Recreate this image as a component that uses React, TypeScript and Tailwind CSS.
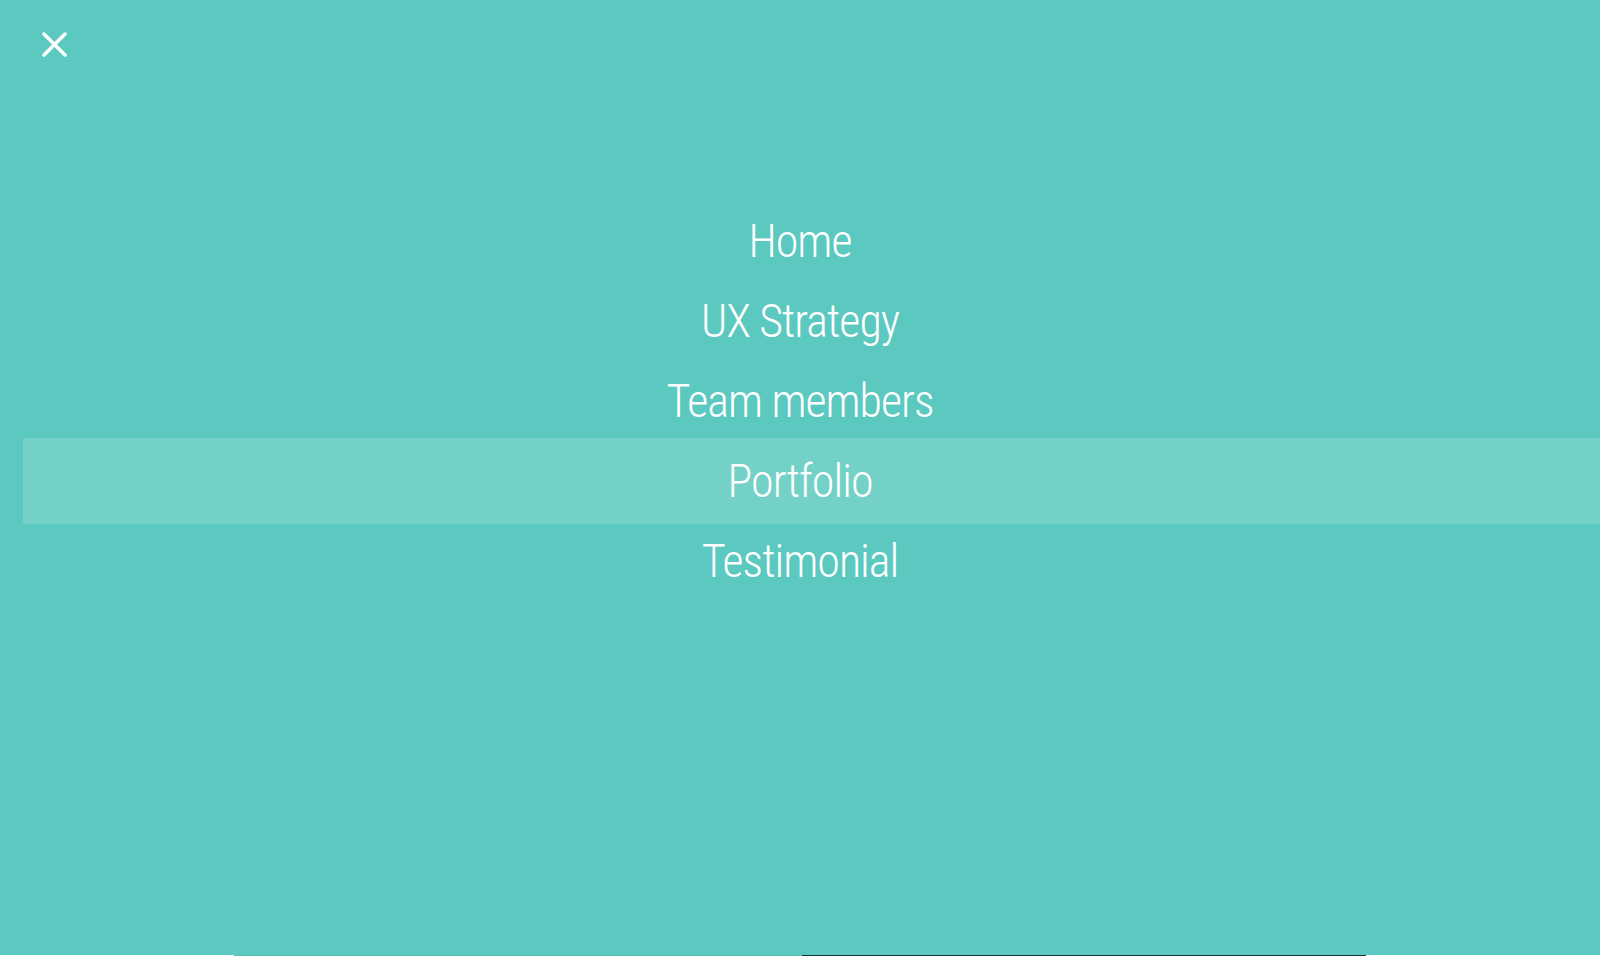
const menuItems = [
  { label: "Home" },
  { label: "UX Strategy" },
  { label: "Team members" },
  { label: "Portfolio", active: true },
  { label: "Testimonial" },
];

function CloseIcon() {
  return (
    <svg width="25" height="25" viewBox="0 0 25 25" fill="none" stroke="white" strokeWidth="3.5" strokeLinecap="round">
      <path d="M2 2 L23 23" />
      <path d="M23 2 L2 23" />
    </svg>
  );
}

export default function App() {
  return (
    <div className="relative flex h-[956px] w-full flex-col overflow-hidden bg-[#5bc9bf] font-['Roboto',sans-serif] text-white">
      <header className="pl-[42px] pt-[32px]">
        <button className="block h-[25px] w-[25px]" aria-label="Close menu">
          <CloseIcon />
        </button>
      </header>

      <nav className="mt-[144px]">
        <ul>
          {menuItems.map((item) => (
            <li key={item.label} className="relative h-[80px]">
              {item.active && (
                <div className="absolute bottom-[-3px] left-[23px] right-0 top-[-3px] bg-white/15" />
              )}
              <a href="#" className="relative block text-center text-[46px] font-light leading-[80px] tracking-[-1px] font-stretch-condensed">
                {item.label}
              </a>
            </li>
          ))}
        </ul>
      </nav>

      <div className="mt-auto flex h-px">
        <div className="w-[234px] bg-white" />
        <div className="w-[568px] bg-[#52c1b8]" />
        <div className="w-[564px] bg-[#12303a]" />
        <div className="flex-1 bg-white" />
      </div>
    </div>
  );
}
